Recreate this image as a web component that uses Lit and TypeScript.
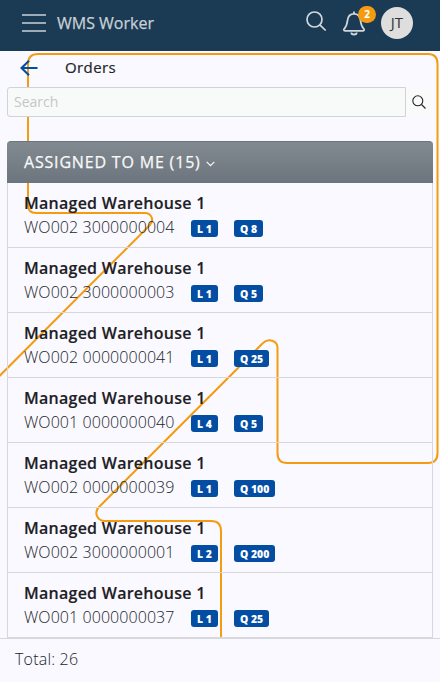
import { LitElement, html, css } from "lit";
import { customElement } from "lit/decorators.js";

interface Order {
  warehouse: string;
  code: string;
  lines: number;
  quantity: number;
}

const ORDERS: Order[] = [
  { warehouse: "Managed Warehouse 1", code: "WO002 3000000004", lines: 1, quantity: 8 },
  { warehouse: "Managed Warehouse 1", code: "WO002 3000000003", lines: 1, quantity: 5 },
  { warehouse: "Managed Warehouse 1", code: "WO002 0000000041", lines: 1, quantity: 25 },
  { warehouse: "Managed Warehouse 1", code: "WO001 0000000040", lines: 4, quantity: 5 },
  { warehouse: "Managed Warehouse 1", code: "WO002 0000000039", lines: 1, quantity: 100 },
  { warehouse: "Managed Warehouse 1", code: "WO002 3000000001", lines: 2, quantity: 200 },
  { warehouse: "Managed Warehouse 1", code: "WO001 0000000037", lines: 1, quantity: 25 },
];

@customElement("order-row")
class OrderRow extends LitElement {
  static properties = { order: { attribute: false } };
  declare order: Order;

  static styles = css`
    :host {
      display: block;
      box-sizing: border-box;
      height: 65px;
      padding: 8px 16px 0;
      border-bottom: 1px solid #d7d7dd;
    }
    .name {
      font-size: 16px;
      font-weight: 600;
      letter-spacing: 0.26px;
      line-height: 24px;
      color: #1d2024;
      -webkit-text-stroke: 0.15px #1d2024;
    }
    .detail {
      display: flex;
      align-items: center;
      height: 24px;
    }
    .code {
      width: 167px;
      font-size: 16px;
      font-weight: 300;
      letter-spacing: 0.07px;
      line-height: 24px;
      color: #212529;
      white-space: nowrap;
    }
    .slot {
      min-width: 43px;
    }
    .badge {
      display: block;
      width: max-content;
      box-sizing: border-box;
      height: 17px;
      margin-top: 3px;
      padding: 0 6px;
      border-radius: 3px;
      background: #034ea2;
      color: #fff;
      font-size: 10.4px;
      font-weight: 800;
      line-height: 19px;
      white-space: nowrap;
    }
  `;

  render() {
    const { warehouse, code, lines, quantity } = this.order;
    return html`
      <div class="name">${warehouse}</div>
      <div class="detail">
        <span class="code">${code}</span>
        <span class="slot"><span class="badge">L ${lines}</span></span>
        <span class="slot"><span class="badge">Q ${quantity}</span></span>
      </div>
    `;
  }
}

@customElement("app-root")
class AppRoot extends LitElement {
  static styles = css`
    :host {
      display: flex;
      flex-direction: column;
      position: relative;
      z-index: 0;
      width: 440px;
      height: 682px;
      overflow: hidden;
      background: #faf9ff;
      color: #212529;
      font-family: "Open Sans", "Noto Sans", sans-serif;
    }
    svg {
      display: block;
      fill: none;
    }
    .trace {
      position: absolute;
      inset: 0;
      z-index: -1;
      stroke: #f39c12;
      stroke-width: 2;
    }
    .topbar {
      display: flex;
      align-items: flex-start;
      box-sizing: border-box;
      height: 51px;
      padding-left: 22px;
      background: #1b3a53;
      color: #c8d0d6;
    }
    .menu {
      margin: 13px 11px 0 0;
      stroke: #9dabb6;
      stroke-width: 2;
    }
    .brand {
      flex: 1;
      margin-top: 11px;
      font-size: 16px;
      font-weight: 500;
      line-height: 24px;
      -webkit-text-stroke: 0.25px #c8d0d6;
    }
    .find {
      margin: 10px 15px 0 0;
      stroke: #d1d8dd;
      stroke-width: 1.7;
    }
    .alerts {
      position: relative;
      margin: 10px 16px 0 0;
      stroke: #d1d8dd;
      stroke-width: 1.8;
    }
    .count {
      position: absolute;
      left: 15px;
      top: -4px;
      width: 18px;
      height: 17px;
      border-radius: 9px;
      background: #f39c12;
      color: #fff;
      font-size: 10px;
      font-weight: 700;
      line-height: 17px;
      text-align: center;
    }
    .avatar {
      width: 32px;
      height: 32px;
      margin: 7px 27px 0 0;
      border-radius: 50%;
      background: #dedede;
      color: #333;
      font-size: 15px;
      line-height: 31px;
      text-align: center;
    }
    .heading {
      display: flex;
      align-items: center;
      box-sizing: border-box;
      height: 34px;
      padding: 0 0 1px 20px;
    }
    .back {
      margin-right: 27px;
      stroke: #034ea2;
      stroke-width: 2.1;
    }
    .title {
      padding-bottom: 2px;
      font-size: 15px;
      font-weight: 500;
      letter-spacing: 0.4px;
      -webkit-text-stroke: 0.2px #212529;
    }
    .search {
      display: flex;
      height: 30px;
      margin: 2px 7px 0;
    }
    .field {
      box-sizing: border-box;
      width: 399px;
      padding: 0 6px;
      border: 1px solid #ced4da;
      border-radius: 3px 0 0 3px;
      background: #f8faf9;
      color: #c3c7c5;
      font-size: 14px;
      line-height: 28px;
    }
    .go {
      width: 26px;
      padding: 8px 0 0 6px;
      box-sizing: border-box;
      background: #f9faf9;
      stroke: #212529;
      stroke-width: 1.1;
    }
    .group {
      display: flex;
      align-items: center;
      box-sizing: border-box;
      height: 42px;
      margin: 24px 7px 0;
      padding: 0 0 2px 17px;
      border: 1px solid #6c757d;
      border-width: 1px 0 0;
      border-radius: 4px 4px 0 0;
      background: linear-gradient(#828a91, #6c757d);
      color: #f8f9fa;
      font-size: 16px;
      font-weight: 500;
      letter-spacing: 0.82px;
      -webkit-text-stroke: 0.25px #f8f9fa;
    }
    .chevron {
      margin: 5px 0 0 5px;
      stroke: #f8f9fa;
      stroke-width: 1.2;
    }
    .list {
      height: 455px;
      margin: 0 7px;
      box-sizing: border-box;
      border: solid #d7d7dd;
      border-width: 0 1px;
    }
    .footer {
      box-sizing: border-box;
      height: 44px;
      padding-left: 15px;
      border-top: 1px solid #d7d7dd;
      background: #faf9ff;
      font-size: 16px;
      font-weight: 300;
      letter-spacing: 0.2px;
      line-height: 40px;
    }
  `;

  render() {
    return html`
      <svg class="trace" width="440" height="682" viewBox="0 0 440 682">
        <path
          d="M-4 379.5 L149.5 225.5 C155 220 151 213 145 213 H36 Q28 213 28 205 V64 Q28 54 38 54 H428 Q437.500 54 437.500 64 V453 Q437.500 463 428 463 H287 Q277.500 463 277.500 453 V348 C277.500 340.500 268.500 338 263 343 L98.500 507.500 C94 512.500 97 521 105 521 H211 Q221 521 221 531 V640"
        />
      </svg>
      <header class="topbar">
        <svg class="menu" width="24" height="20"><path d="M0 2H24M0 10H24M0 18H24" /></svg>
        <span class="brand">WMS Worker</span>
        <svg class="find" width="22" height="22">
          <circle cx="8.500" cy="9.500" r="7.500" />
          <path d="M13.800 14.800L19.700 20.500" />
        </svg>
        <div class="alerts">
          <svg width="22" height="26">
            <path
              stroke-linejoin="round"
              d="M2 20.800C0.500 20.800 .6 19.400 1.600 18.400C3.600 16.200 4.100 14 4.500 10.500C5 6 7.500 3.800 11 3.800S17 6 17.500 10.500C17.900 14 18.400 16.200 20.400 18.400C21.400 19.400 21.500 20.800 20 20.800Z"
            />
            <path d="M11 1.500V3.800M8.300 22.500A2.700 2 0 0 0 13.700 22.500" />
          </svg>
          <span class="count">2</span>
        </div>
        <span class="avatar">JT</span>
      </header>
      <div class="heading">
        <svg class="back" width="18" height="16">
          <path d="M17.500 8H1.500M9 .8L1.500 8L9 15.200" />
        </svg>
        <span class="title">Orders</span>
      </div>
      <div class="search">
        <div class="field">Search</div>
        <div class="go">
          <svg width="15" height="15">
            <circle cx="5.800" cy="5.800" r="5" />
            <path d="M9.500 9.500L13.500 13.500" />
          </svg>
        </div>
      </div>
      <div class="group">
        ASSIGNED TO ME (15)
        <svg class="chevron" width="9" height="6"><path d="M.7 .8L4.500 4.600L8.300 .8" /></svg>
      </div>
      <div class="list">${ORDERS.map((order) => html`<order-row .order=${order}></order-row>`)}</div>
      <footer class="footer">Total: 26</footer>
    `;
  }
}
